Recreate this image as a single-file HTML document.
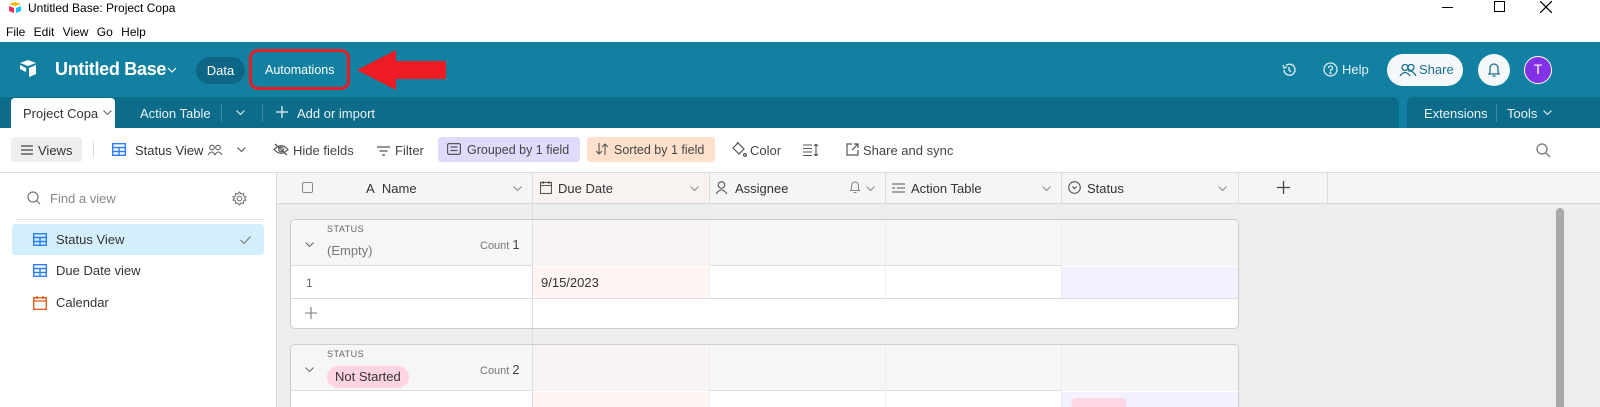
<!DOCTYPE html>
<html><head><meta charset="utf-8"><style>
*{box-sizing:border-box;margin:0;padding:0}
html,body{width:1600px;height:407px;overflow:hidden}
body{background:#fff;font-family:"Liberation Sans",sans-serif;font-size:13px;color:#333;position:relative}
.a{position:absolute}
.w{color:#fff}
svg{display:block}
.cv{display:inline-block;vertical-align:middle}
</style></head><body>
<!-- title bar -->
<div class="a" style="left:8px;top:2px"><svg width="14" height="12"><path d="M1 2 L7 0 L13 2 L7 4Z" fill="#fcb400"/><path d="M1 4 L6 6 L6 11 L1 9Z" fill="#f82b60"/><path d="M8 6 L13 4 L13 9 L8 11Z" fill="#18bfff"/></svg></div>
<div class="a" style="left:28px;top:1px;font-size:12px;color:#000">Untitled Base: Project Copa</div>
<div class="a" style="left:1442px;top:7px;width:11px;height:1px;background:#000"></div>
<div class="a" style="left:1494px;top:1px;width:11px;height:11px;border:1px solid #000"></div>
<div class="a" style="left:1540px;top:1px"><svg width="12" height="12" stroke="#000" stroke-width="1.2"><path d="M0 0 L12 12 M12 0 L0 12"/></svg></div>
<div class="a" style="left:6px;top:25px;font-size:12px;color:#000;word-spacing:5px">File Edit View Go Help</div>
<!-- header -->
<div class="a" style="left:0;top:42px;width:1600px;height:86px;background:#1180a1"></div>
<div class="a" style="left:18px;top:58px"><svg width="20" height="22" viewBox="0 0 20 22"><path d="M2 5 L10 2 L18 5 L10 8Z" fill="#fff"/><path d="M2 7 L8 10 L8 14 L2 11Z" fill="#fff"/><path d="M11 10 L18 7 L18 16 L11 19Z" fill="#fff"/></svg></div>
<div class="a w" style="left:55px;top:59px;font-size:18px;font-weight:bold;letter-spacing:-0.3px">Untitled Base</div>
<div class="a" style="left:167px;top:67px"><svg width="10" height="6" fill="none" stroke="#fff" stroke-width="1.2"><path d="M1 1 L5 5 L9 1"/></svg></div>
<div class="a w" style="left:196px;top:57px;width:49px;height:27px;border-radius:14px;background:#0d6685;text-align:center;line-height:27px">Data</div>
<div class="a" style="left:249px;top:49px;width:101px;height:41px;border:3px solid #e81c24;border-radius:9px"></div>
<div class="a w" style="left:265px;top:63px;font-size:12.5px">Automations</div>
<div class="a" style="left:355px;top:49px"><svg width="92" height="42"><path d="M2 21 L41 1 L41 12 L91 12 L91 30 L41 30 L41 41Z" fill="#ed1c24"/></svg></div>
<div class="a" style="left:1281px;top:62px"><svg width="16" height="16" fill="none" stroke="#dbeaf0" stroke-width="1.4"><path d="M3 8 A5.5 5.5 0 1 0 5 3.5"/><path d="M2 3 L3 6 L6 5"/><path d="M8 5 V8 L10 10"/></svg></div>
<div class="a" style="left:1323px;top:62px"><svg width="15" height="15" fill="none" stroke="#dbeaf0" stroke-width="1.3"><circle cx="7.5" cy="7.5" r="6.5"/><path d="M5.5 6 A2 2 0 1 1 7.5 8 V9.5"/><circle cx="7.5" cy="11.3" r=".5"/></svg></div>
<div class="a" style="left:1342px;top:62px;color:#e6f1f5">Help</div>
<div class="a" style="left:1387px;top:54px;width:76px;height:32px;border-radius:16px;background:#f4f8fa"></div>
<div class="a" style="left:1399px;top:63px"><svg width="18" height="14" fill="none" stroke="#1a6f8e" stroke-width="1.3"><circle cx="6" cy="4.5" r="3"/><circle cx="12" cy="4.5" r="3"/><path d="M1 13 Q6 6 11 13 M9 8 Q14 7 17 13"/></svg></div>
<div class="a" style="left:1419px;top:62px;color:#1a6f8e">Share</div>
<div class="a" style="left:1478px;top:54px;width:32px;height:32px;border-radius:50%;background:#f4f8fa"></div>
<div class="a" style="left:1487px;top:62px"><svg width="14" height="16" fill="none" stroke="#1a6f8e" stroke-width="1.3"><path d="M2 12 L3 10 V6 A4 4 0 0 1 11 6 V10 L12 12Z M5.5 14 H8.5"/></svg></div>
<div class="a w" style="left:1524px;top:56px;width:28px;height:28px;border-radius:50%;background:#8231e6;border:1.5px solid #fff;text-align:center;line-height:25px;font-size:14px">T</div>
<!-- tab bar -->
<div class="a" style="left:0;top:97px;width:1399px;height:31px;background:#0e6c8b;border-radius:0 6px 0 0"></div>
<div class="a" style="left:1407px;top:97px;width:193px;height:31px;background:#0e6c8b;border-radius:6px 0 0 0"></div>
<div class="a" style="left:11px;top:98px;width:104px;height:32px;background:#fff;border-radius:4px 4px 0 0"></div>
<div class="a" style="left:23px;top:106px;color:#333">Project Copa</div>
<div class="a" style="left:103px;top:110px"><svg width="9" height="5" fill="none" stroke="#666" stroke-width="1.1"><path d="M.5 .5 L4.5 4.5 L8.5 .5"/></svg></div>
<div class="a" style="left:140px;top:106px;color:#e8f2f6">Action Table</div>
<div class="a" style="left:221px;top:104px;width:1px;height:18px;background:#3e8aa5"></div>
<div class="a" style="left:236px;top:110px"><svg width="9" height="5" fill="none" stroke="#e8f2f6" stroke-width="1.1"><path d="M.5 .5 L4.5 4.5 L8.5 .5"/></svg></div>
<div class="a" style="left:262px;top:104px;width:1px;height:18px;background:#3e8aa5"></div>
<div class="a" style="left:276px;top:106px"><svg width="12" height="12" stroke="#e8f2f6" stroke-width="1.3"><path d="M6 0 V12 M0 6 H12"/></svg></div>
<div class="a" style="left:297px;top:106px;color:#e8f2f6">Add or import</div>
<div class="a" style="left:1424px;top:106px;color:#e8f2f6">Extensions</div>
<div class="a" style="left:1496px;top:104px;width:1px;height:18px;background:#3e8aa5"></div>
<div class="a" style="left:1507px;top:106px;color:#e8f2f6">Tools</div>
<div class="a" style="left:1543px;top:110px"><svg width="9" height="5" fill="none" stroke="#e8f2f6" stroke-width="1.1"><path d="M.5 .5 L4.5 4.5 L8.5 .5"/></svg></div>
<!-- toolbar -->
<div class="a" style="left:11px;top:137px;width:71px;height:25px;background:#eee;border-radius:3px"></div>
<div class="a" style="left:21px;top:145px"><svg width="12" height="10" stroke="#444" stroke-width="1.3"><path d="M0 1 H12 M0 5 H12 M0 9 H12"/></svg></div>
<div class="a" style="left:38px;top:143px;color:#333">Views</div>
<div class="a" style="left:93px;top:141px;width:1px;height:17px;background:#ddd"></div>
<div class="a" style="left:112px;top:143px"><svg width="14" height="13" fill="none" stroke="#2d7ff9" stroke-width="1.4"><rect x=".7" y=".7" width="12.6" height="11.6"/><path d="M.7 4.5 H13.3 M.7 8.5 H13.3 M7 4.5 V12.3"/></svg></div>
<div class="a" style="left:135px;top:143px;color:#333">Status View</div>
<div class="a" style="left:207px;top:144px"><svg width="16" height="12" fill="none" stroke="#555" stroke-width="1"><circle cx="5" cy="3.5" r="2.3"/><circle cx="11" cy="3.5" r="2.3"/><path d="M1 11 Q5 5 8 11 M8 11 Q11 5 15 11"/></svg></div>
<div class="a" style="left:237px;top:147px"><svg width="9" height="5" fill="none" stroke="#555" stroke-width="1.1"><path d="M.5 .5 L4.5 4.5 L8.5 .5"/></svg></div>
<div class="a" style="left:273px;top:143px"><svg width="16" height="13" fill="none" stroke="#555" stroke-width="1.2"><path d="M1 6.5 Q8 -1 15 6.5 Q8 14 1 6.5Z"/><circle cx="8" cy="6.5" r="2.3"/><path d="M2 1 L14 12"/></svg></div>
<div class="a" style="left:293px;top:143px;color:#444">Hide fields</div>
<div class="a" style="left:377px;top:146px"><svg width="13" height="10" stroke="#555" stroke-width="1.2"><path d="M0 1 H13 M2.5 5 H10.5 M5 9 H8"/></svg></div>
<div class="a" style="left:395px;top:143px;color:#444">Filter</div>
<div class="a" style="left:438px;top:137px;width:142px;height:25px;background:#e0dafd;border-radius:3px"></div>
<div class="a" style="left:447px;top:143px"><svg width="14" height="12" fill="none" stroke="#555" stroke-width="1.2"><rect x=".6" y=".6" width="12.8" height="10.8" rx="1.5"/><path d="M3.5 4 H10.5 M3.5 7.5 H10.5"/></svg></div>
<div class="a" style="left:467px;top:143px;color:#444;font-size:12.5px">Grouped by 1 field</div>
<div class="a" style="left:587px;top:137px;width:128px;height:25px;background:#ffe0cc;border-radius:3px"></div>
<div class="a" style="left:596px;top:143px"><svg width="12" height="12" fill="none" stroke="#555" stroke-width="1.1"><path d="M3 0 V11 M0 8 L3 11 L6 8 M9 12 V1 M6 4 L9 1 L12 4"/></svg></div>
<div class="a" style="left:614px;top:143px;color:#444;font-size:12.5px">Sorted by 1 field</div>
<div class="a" style="left:731px;top:142px"><svg width="16" height="15" fill="none" stroke="#555" stroke-width="1.2"><path d="M2 6 L7 1 L13 7 L8 12 Z M7 1 L5 -1"/><circle cx="14" cy="13" r="1.4"/></svg></div>
<div class="a" style="left:750px;top:143px;color:#444">Color</div>
<div class="a" style="left:803px;top:144px"><svg width="16" height="12" stroke="#555" stroke-width="1.1" fill="none"><path d="M0 1 H9 M0 4.5 H9 M0 8 H9 M0 11.5 H9 M13 0 V12 M11 2 L13 0 L15 2 M11 10 L13 12 L15 10"/></svg></div>
<div class="a" style="left:846px;top:143px"><svg width="13" height="13" fill="none" stroke="#555" stroke-width="1.2"><path d="M6 1 H1 V12 H12 V7 M8 1 H12 V5 M12 1 L6 7"/></svg></div>
<div class="a" style="left:863px;top:143px;color:#444">Share and sync</div>
<div class="a" style="left:1536px;top:143px"><svg width="15" height="15" fill="none" stroke="#777" stroke-width="1.3"><circle cx="6" cy="6" r="5"/><path d="M10 10 L14 14"/></svg></div>
<div class="a" style="left:0;top:172px;width:1600px;height:1px;background:#ddd"></div>
<!-- sidebar -->
<div class="a" style="left:276px;top:173px;width:1px;height:234px;background:#ddd"></div>
<div class="a" style="left:27px;top:191px"><svg width="14" height="14" fill="none" stroke="#777" stroke-width="1.2"><circle cx="6" cy="6" r="5"/><path d="M9.7 9.7 L13 13"/></svg></div>
<div class="a" style="left:50px;top:191px;color:#888">Find a view</div>
<div class="a" style="left:232px;top:191px"><svg width="15" height="15" fill="none" stroke="#777" stroke-width="1.1"><circle cx="7.5" cy="7.5" r="2.3"/><path d="M7.5 1 L9 3 L11.5 2.5 L11.5 5 L14 6 L12.5 7.5 L14 9 L11.5 10 L11.5 12.5 L9 12 L7.5 14 L6 12 L3.5 12.5 L3.5 10 L1 9 L2.5 7.5 L1 6 L3.5 5 L3.5 2.5 L6 3Z"/></svg></div>
<div class="a" style="left:16px;top:219px;width:249px;height:1px;background:#e2e2e2"></div>
<div class="a" style="left:12px;top:224px;width:252px;height:31px;background:#d4effc;border-radius:3px"></div>
<div class="a" style="left:33px;top:233px"><svg width="14" height="13" fill="none" stroke="#2d7ff9" stroke-width="1.4"><rect x=".7" y=".7" width="12.6" height="11.6"/><path d="M.7 4.5 H13.3 M.7 8.5 H13.3 M7 4.5 V12.3"/></svg></div>
<div class="a" style="left:56px;top:232px;color:#333">Status View</div>
<div class="a" style="left:240px;top:236px"><svg width="11" height="8" fill="none" stroke="#777" stroke-width="1.1"><path d="M.5 4 L4 7.5 L10.5 .5"/></svg></div>
<div class="a" style="left:33px;top:264px"><svg width="14" height="13" fill="none" stroke="#2d7ff9" stroke-width="1.4"><rect x=".7" y=".7" width="12.6" height="11.6"/><path d="M.7 4.5 H13.3 M.7 8.5 H13.3 M7 4.5 V12.3"/></svg></div>
<div class="a" style="left:56px;top:263px;color:#333">Due Date view</div>
<div class="a" style="left:33px;top:296px"><svg width="14" height="14" fill="none" stroke="#e0570f" stroke-width="1.3"><rect x=".7" y="1.7" width="12.6" height="11.6"/><path d="M.7 5 H13.3 M4 0 V3 M10 0 V3"/></svg></div>
<div class="a" style="left:56px;top:295px;color:#333">Calendar</div>
<!-- grid -->
<div class="a" style="left:277px;top:173px;width:1323px;height:234px;background:#ededed"></div>
<div class="a" style="left:277px;top:173px;width:1052px;height:31px;background:#f5f5f5;border-bottom:1px solid #d5d5d5"></div>
<div class="a" style="left:532px;top:173px;width:177px;height:30px;background:#f8f2f1"></div>
<div class="a" style="left:1329px;top:173px;width:271px;height:31px;background:#f5f5f5;border-bottom:1px solid #d5d5d5"></div>
<div class="a" style="left:532px;top:173px;width:1px;height:234px;background:#ddd"></div>
<div class="a" style="left:709px;top:173px;width:1px;height:31px;background:#ddd"></div>
<div class="a" style="left:885px;top:173px;width:1px;height:31px;background:#ddd"></div>
<div class="a" style="left:1061px;top:173px;width:1px;height:31px;background:#ddd"></div>
<div class="a" style="left:1238px;top:173px;width:1px;height:31px;background:#ddd"></div>
<div class="a" style="left:1327px;top:173px;width:1px;height:31px;background:#ddd"></div>
<div class="a" style="left:302px;top:182px;width:11px;height:11px;border:1px solid #888;border-radius:2px"></div>
<div class="a" style="left:366px;top:181px;color:#333">A&nbsp; Name</div>
<div class="a" style="left:513px;top:186px"><svg width="9" height="5" fill="none" stroke="#888" stroke-width="1"><path d="M.5 .5 L4.5 4.5 L8.5 .5"/></svg></div>
<div class="a" style="left:540px;top:181px"><svg width="12" height="13" fill="none" stroke="#555" stroke-width="1.1"><rect x=".5" y="1.5" width="11" height="11"/><path d="M.5 4.5 H11.5 M3 0 V3 M9 0 V3"/></svg></div>
<div class="a" style="left:558px;top:181px;color:#333">Due Date</div>
<div class="a" style="left:690px;top:186px"><svg width="9" height="5" fill="none" stroke="#888" stroke-width="1"><path d="M.5 .5 L4.5 4.5 L8.5 .5"/></svg></div>
<div class="a" style="left:715px;top:181px"><svg width="13" height="13" fill="none" stroke="#555" stroke-width="1.1"><circle cx="6.5" cy="4" r="3.3"/><path d="M1 13 Q6.5 5 12 13"/></svg></div>
<div class="a" style="left:735px;top:181px;color:#333">Assignee</div>
<div class="a" style="left:849px;top:180px"><svg width="12" height="14" fill="none" stroke="#888" stroke-width="1"><path d="M1.5 10.5 L2.5 9 V5.5 A3.5 3.5 0 0 1 9.5 5.5 V9 L10.5 10.5Z M4.5 12.5 H7.5"/></svg></div>
<div class="a" style="left:866px;top:186px"><svg width="9" height="5" fill="none" stroke="#888" stroke-width="1"><path d="M.5 .5 L4.5 4.5 L8.5 .5"/></svg></div>
<div class="a" style="left:892px;top:183px"><svg width="13" height="10" stroke="#555" stroke-width="1.1"><path d="M0 1 H13 M5 5 H13 M0 9 H13 M0 5 H3"/></svg></div>
<div class="a" style="left:911px;top:181px;color:#333">Action Table</div>
<div class="a" style="left:1042px;top:186px"><svg width="9" height="5" fill="none" stroke="#888" stroke-width="1"><path d="M.5 .5 L4.5 4.5 L8.5 .5"/></svg></div>
<div class="a" style="left:1068px;top:181px"><svg width="13" height="13" fill="none" stroke="#555" stroke-width="1.1"><circle cx="6.5" cy="6.5" r="5.8"/><path d="M4.3 5.5 L6.5 7.7 L8.7 5.5"/></svg></div>
<div class="a" style="left:1087px;top:181px;color:#333">Status</div>
<div class="a" style="left:1218px;top:186px"><svg width="9" height="5" fill="none" stroke="#888" stroke-width="1"><path d="M.5 .5 L4.5 4.5 L8.5 .5"/></svg></div>
<div class="a" style="left:1277px;top:181px"><svg width="13" height="13" stroke="#444" stroke-width="1.3"><path d="M6.5 0 V13 M0 6.5 H13"/></svg></div>
<!-- group 1 -->
<div class="a" style="left:290px;top:219px;width:949px;height:110px;border:1px solid #ccc;border-radius:5px;background:#fff;overflow:hidden">
 <div class="a" style="left:0;top:0;width:947px;height:46px;background:#f6f6f6;border-bottom:1px solid #ddd"></div>
 <div class="a" style="left:242px;top:0;width:177px;height:46px;background:#f7f4f3"></div>
 <div class="a" style="left:770px;top:0;width:177px;height:46px;background:#f5f5f8"></div>
 <div class="a" style="left:242px;top:47px;width:177px;height:31px;background:#fff5f2"></div>
 <div class="a" style="left:770px;top:47px;width:177px;height:31px;background:#f3f1fd"></div>
 <div class="a" style="left:0;top:78px;width:947px;height:1px;background:#ddd"></div>
 <div class="a" style="left:241px;top:0;width:1px;height:110px;background:#ddd"></div>
 <div class="a" style="left:418px;top:0;width:1px;height:78px;background:#eee"></div>
 <div class="a" style="left:594px;top:0;width:1px;height:78px;background:#eee"></div>
 <div class="a" style="left:770px;top:0;width:1px;height:78px;background:#eee"></div>
 <div class="a" style="left:36px;top:4px;font-size:9px;color:#666;letter-spacing:.5px">STATUS</div>
 <div class="a" style="left:14px;top:22px"><svg width="9" height="5" fill="none" stroke="#666" stroke-width="1"><path d="M.5 .5 L4.5 4.5 L8.5 .5"/></svg></div>
 <div class="a" style="left:36px;top:23px;color:#777">(Empty)</div>
 <div class="a" style="left:189px;top:17px;color:#777;font-size:11px">Count <span style="font-size:13px;color:#444">1</span></div>
 <div class="a" style="left:15px;top:56px;color:#666;font-size:12px">1</div>
 <div class="a" style="left:250px;top:55px;color:#333">9/15/2023</div>
 <div class="a" style="left:14px;top:87px"><svg width="12" height="12" stroke="#777" stroke-width="1.1"><path d="M6 0 V12 M0 6 H12"/></svg></div>
</div>
<!-- group 2 -->
<div class="a" style="left:290px;top:344px;width:949px;height:80px;border:1px solid #ccc;border-radius:5px;background:#fff;overflow:hidden">
 <div class="a" style="left:0;top:0;width:947px;height:46px;background:#f6f6f6;border-bottom:1px solid #ddd"></div>
 <div class="a" style="left:242px;top:0;width:177px;height:46px;background:#f7f4f3"></div>
 <div class="a" style="left:770px;top:0;width:177px;height:46px;background:#f5f5f8"></div>
 <div class="a" style="left:242px;top:47px;width:177px;height:20px;background:#fff5f2"></div>
 <div class="a" style="left:770px;top:47px;width:177px;height:20px;background:#f3f1fd"></div>
 <div class="a" style="left:780px;top:53px;width:56px;height:10px;background:#ffd6e6;border-radius:6px"></div>
 <div class="a" style="left:241px;top:0;width:1px;height:80px;background:#ddd"></div>
 <div class="a" style="left:418px;top:0;width:1px;height:80px;background:#eee"></div>
 <div class="a" style="left:594px;top:0;width:1px;height:80px;background:#eee"></div>
 <div class="a" style="left:770px;top:0;width:1px;height:80px;background:#eee"></div>
 <div class="a" style="left:36px;top:4px;font-size:9px;color:#666;letter-spacing:.5px">STATUS</div>
 <div class="a" style="left:14px;top:22px"><svg width="9" height="5" fill="none" stroke="#666" stroke-width="1"><path d="M.5 .5 L4.5 4.5 L8.5 .5"/></svg></div>
 <div class="a" style="left:36px;top:21px;height:22px;padding:0 8px;border-radius:11px;background:#ffd4e2;color:#333;line-height:22px">Not Started</div>
 <div class="a" style="left:189px;top:17px;color:#777;font-size:11px">Count <span style="font-size:13px;color:#444">2</span></div>
</div>
<div class="a" style="left:1556px;top:208px;width:8px;height:199px;background:#a9a9a9;border-radius:4px 4px 0 0"></div>
</body></html>
